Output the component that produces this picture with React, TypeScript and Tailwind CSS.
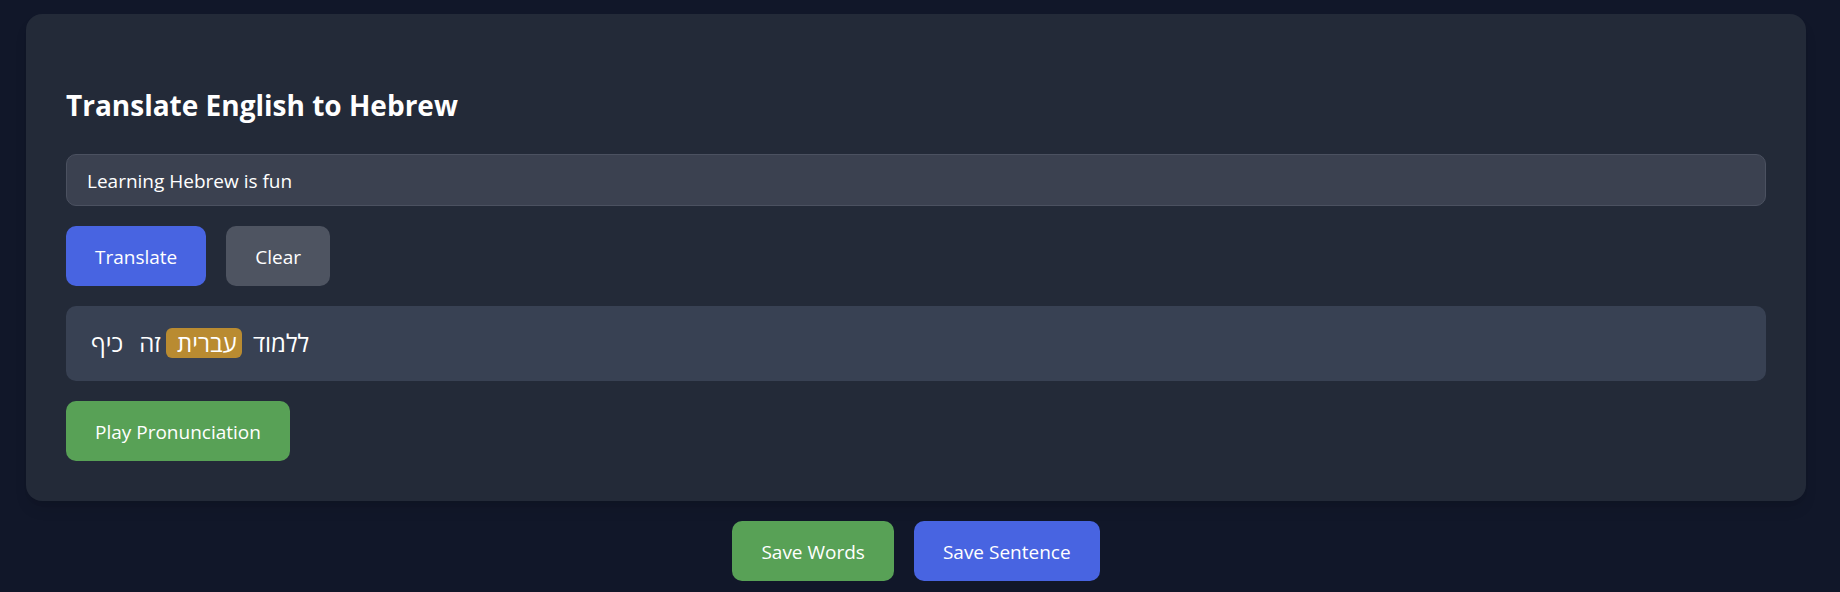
import { useState } from "react";

const words = [
  { text: "ללמוד", highlighted: false },
  { text: "עברית", highlighted: true },
  { text: "זה", highlighted: false },
  { text: "כיף", highlighted: false },
];

const buttonColors = {
  blue: "bg-[#4864e1] hover:bg-[#3f59cf]",
  gray: "bg-[#4e5461] hover:bg-[#5b6170]",
  green: "bg-[#58a156] hover:bg-[#4c904a]",
};

function Button({
  color,
  label,
  onClick,
}: {
  color: keyof typeof buttonColors;
  label: string;
  onClick?: () => void;
}) {
  return (
    <button
      type="button"
      onClick={onClick}
      className={`h-15 cursor-pointer rounded-[10px] px-[29px] pt-0.5 text-[19px] text-white ${buttonColors[color]}`}
    >
      {label}
    </button>
  );
}

export default function App() {
  const [sentence, setSentence] = useState("Learning Hebrew is fun");

  return (
    <main className="min-h-screen bg-[#111729] pt-[14px] pr-[34px] pb-2 pl-[26px] font-['Open_Sans','Noto_Sans',sans-serif] text-white">
      <section className="flex flex-col items-start gap-5 rounded-2xl bg-[#232a38] px-10 pt-[71px] pb-10 shadow-lg">
        <h2 className="mb-[9px] text-[28px] leading-10 font-bold">
          <label htmlFor="sentence" className="block">
            Translate English to Hebrew
          </label>
        </h2>
        <input
          id="sentence"
          type="text"
          value={sentence}
          onChange={(event) => setSentence(event.target.value)}
          className="h-[52px] w-full rounded-[10px] border border-[#4b5160] bg-[#3b4150] px-5 pt-0.5 text-[19px] text-white outline-none"
        />
        <div className="flex gap-5">
          <Button color="blue" label="Translate" />
          <Button color="gray" label="Clear" onClick={() => setSentence("")} />
        </div>
        <p
          dir="rtl"
          lang="he"
          className="flex h-[75px] w-full items-start justify-end rounded-[10px] bg-[#384153] px-5 pt-[22px] text-2xl leading-[30px]"
        >
          {words.map((word, index) => (
            <span
              key={word.text}
              className={`rounded-md px-[5px] whitespace-pre ${word.highlighted ? "bg-[#b98b31]" : ""}`}
            >
              {index < words.length - 1 ? `${word.text} ` : word.text}
            </span>
          ))}
        </p>
        <Button color="green" label="Play Pronunciation" />
      </section>
      <div className="mt-5 flex justify-center gap-5">
        <Button color="green" label="Save Words" />
        <Button color="blue" label="Save Sentence" />
      </div>
    </main>
  );
}
